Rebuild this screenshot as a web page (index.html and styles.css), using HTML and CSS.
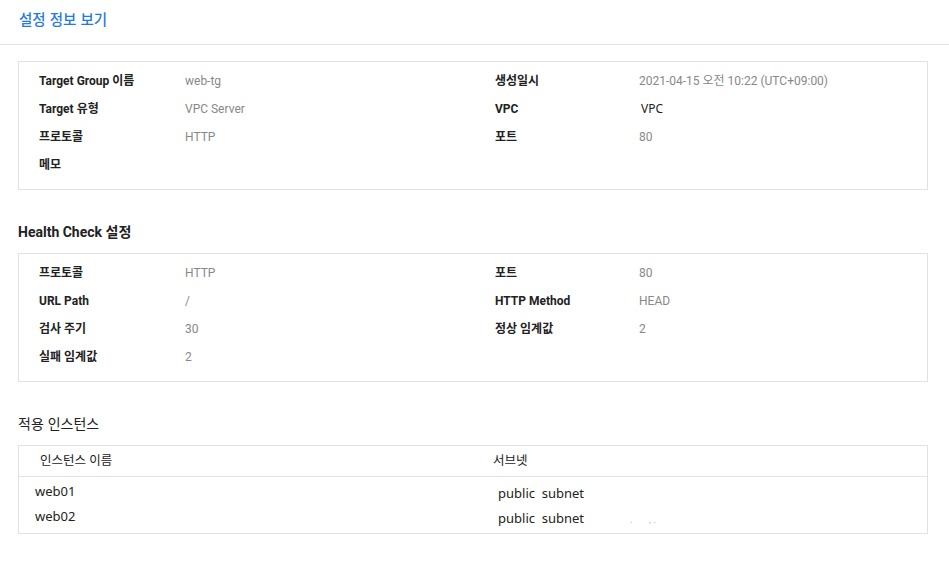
FILE: index.html
```html
<!DOCTYPE html>
<html lang="ko">
<head>
<meta charset="utf-8">
<title>설정 정보 보기</title>
<link rel="stylesheet" href="styles.css">
</head>
<body>
<header class="page-header">
  <h1 class="page-title">설정 정보 보기</h1>
</header>
<main class="content">
  <section class="card info-grid first-card">
    <div class="label">Target Group 이름</div><div class="value">web-tg</div>
    <div class="label">생성일시</div><div class="value">2021-04-15 오전 10:22 (UTC+09:00)</div>
    <div class="label">Target 유형</div><div class="value">VPC Server</div>
    <div class="label">VPC</div><div class="value dark">VPC</div>
    <div class="label">프로토콜</div><div class="value">HTTP</div>
    <div class="label">포트</div><div class="value">80</div>
    <div class="label">메모</div><div class="value"></div>
    <div class="label"></div><div class="value"></div>
  </section>

  <h2 class="section-title bold">Health Check 설정</h2>
  <section class="card info-grid">
    <div class="label">프로토콜</div><div class="value">HTTP</div>
    <div class="label">포트</div><div class="value">80</div>
    <div class="label">URL Path</div><div class="value">/</div>
    <div class="label">HTTP Method</div><div class="value">HEAD</div>
    <div class="label">검사 주기</div><div class="value">30</div>
    <div class="label">정상 임계값</div><div class="value">2</div>
    <div class="label">실패 임계값</div><div class="value">2</div>
    <div class="label"></div><div class="value"></div>
  </section>

  <h2 class="section-title plain">적용 인스턴스</h2>
  <section class="card table">
    <div class="thead">
      <div class="th name-col">인스턴스 이름</div>
      <div class="th subnet-col">서브넷</div>
    </div>
    <div class="tbody">
      <div class="tr">
        <div class="td name-cell">web01</div>
        <div class="td subnet-cell">public&nbsp; subnet</div>
      </div>
      <div class="tr">
        <div class="td name-cell">web02</div>
        <div class="td subnet-cell">public&nbsp; subnet<span class="ghost">.&nbsp;&nbsp;&nbsp;&nbsp;&nbsp;&nbsp;&nbsp;,&nbsp;.</span></div>
      </div>
    </div>
  </section>
</main>
</body>
</html>
```
FILE: styles.css
```css
* { box-sizing: border-box; }

html, body {
  margin: 0;
  padding: 0;
  background: #ffffff;
}

body {
  font-family: Roboto, "Noto Sans CJK KR", sans-serif;
  color: #222;
  width: 949px;
}

.page-header {
  height: 45px;
  border-bottom: 1px solid #e3e3e3;
  padding: 9px 0 0 19px;
}

.page-title {
  margin: 0;
  font-size: 14.5px;
  line-height: 20px;
  font-weight: 500;
  color: #1f7be0;
  font-family: "Noto Sans CJK KR", sans-serif;
}

.content {
  padding: 16px 21px 0 18px;
}

.card {
  border: 1px solid #e2e2e2;
  background: #fff;
}

.info-grid {
  display: grid;
  grid-template-columns: 146px 310px 144px 1fr;
  grid-auto-rows: 28px;
  padding: 5px 0 10px 20px;
  align-items: center;
}

.label {
  font-size: 12px;
  font-weight: 700;
  color: #222;
  line-height: 16px;
}

.value {
  font-size: 12px;
  color: #888;
  line-height: 16px;
}

.value.dark {
  color: #222;
  padding-left: 2px;
  font-family: "Noto Sans", "Noto Sans CJK KR", sans-serif;
}

.section-title {
  margin: 32px 0 11px 0;
  font-size: 14px;
  line-height: 20px;
  font-weight: 400;
  color: #222;
  font-family: "Noto Sans CJK KR", sans-serif;
}

.section-title.bold {
  font-family: Roboto, "Noto Sans CJK KR", sans-serif;
  font-weight: 700;
}

.section-title.plain {
  margin: 31px 0 12px 0;
}

.table {
  font-family: "Noto Sans", "Noto Sans CJK KR", sans-serif;
  font-size: 13px;
  color: #222;
}

.thead {
  display: grid;
  grid-template-columns: 454px 1fr;
  height: 31px;
  align-items: center;
  border-bottom: 1px solid #e2e2e2;
}

.th {
  font-size: 12.5px;
  line-height: 18px;
  color: #222;
}

.name-col { padding-left: 21px; }
.subnet-col { padding-left: 20px; }

.tbody {
  padding: 1px 0 5px 0;
}

.tr {
  display: grid;
  grid-template-columns: 454px 1fr;
  height: 25px;
}

.td {
  line-height: 18px;
  padding-top: 4px;
}

.name-cell { padding-left: 16px; }

.subnet-cell {
  padding-left: 25px;
  padding-top: 6px;
}

.ghost {
  margin-left: 46px;
  font-size: 9px;
  color: #b8b8b8;
}
```
